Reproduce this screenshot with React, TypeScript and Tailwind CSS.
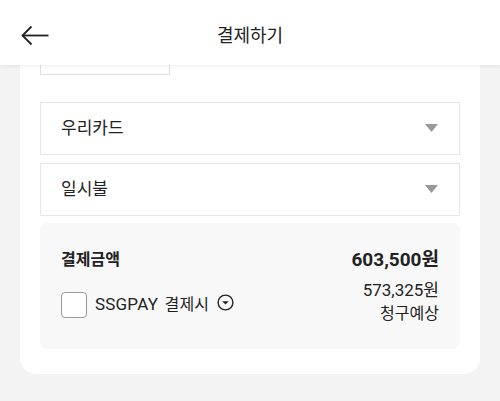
const options = ["우리카드", "일시불"];

function Select({ label }: { label: string }) {
  return (
    <div className="flex items-center justify-between h-[53px] border border-[#e6e6e6] bg-white pl-5 pr-[21px]">
      <span className="text-[17px] text-[#222]">{label}</span>
      <svg width="13" height="8" viewBox="0 0 13 8" className="mt-[-2px]">
        <path d="M0 0h13L6.5 8z" fill="#999" />
      </svg>
    </div>
  );
}

export default function App() {
  return (
    <div
      className="w-[500px] h-[401px] overflow-hidden bg-[#f3f3f3] flex flex-col"
      style={{ fontFamily: 'Roboto, "Noto Sans CJK KR", sans-serif' }}
    >
      {/* Header */}
      <header className="relative z-10 h-[65px] shrink-0 bg-white flex items-center justify-center shadow-[0_1px_5px_rgba(0,0,0,0.08)]">
        <button className="absolute left-[20px] top-[24px] text-[#222]">
          <svg width="30" height="24" viewBox="0 0 30 24" fill="none" stroke="currentColor" strokeWidth="1.8">
            <path d="M2.5 11.5H28.5" />
            <path d="M11.5 2.5L2.5 11.5L11.5 20.5" strokeLinejoin="miter" />
          </svg>
        </button>
        <h1 className="text-[18px] text-[#222] mt-[5px]">결제하기</h1>
      </header>

      <div className="mx-5 bg-white rounded-b-2xl px-5 pb-[25px]">
        <div className="w-[130px] h-[10px] border border-t-0 border-[#e0e0e0]" />

        <div className="mt-[27px] flex flex-col gap-2">
          {options.map((o) => (
            <Select key={o} label={o} />
          ))}
        </div>

        <div className="mt-[7px] h-[126px] bg-[#f8f8f8] rounded-lg px-[21px] pt-[26px]">
          <div className="flex items-center justify-between h-[22px]">
            <span className="text-[16px] font-bold text-[#222]">결제금액</span>
            <span className="text-[19px] font-bold text-[#222]">603,500원</span>
          </div>
          <div className="mt-[8px] flex items-start justify-between">
            <div className="flex items-center mt-[13px]">
              <span className="w-[26px] h-[26px] rounded-[4px] border border-[#999] bg-white" />
              <span className="ml-[8px] text-[17px] text-[#222] tracking-[0.2px]">
                SSGPAY <span className="ml-[2px] text-[16px]">결제시</span>
              </span>
              <svg width="17" height="17" viewBox="0 0 17 17" className="ml-[8px] mt-[-5px]">
                <circle cx="8.5" cy="8.5" r="7.4" fill="none" stroke="#222" strokeWidth="1.4" />
                <path d="M5.3 7.2h6.4L8.5 10.6z" fill="#222" />
              </svg>
            </div>
            <div className="text-right leading-[23px] text-[#222]">
              <div className="text-[17px]">573,325원</div>
              <div className="text-[16px]">청구예상</div>
            </div>
          </div>
        </div>
      </div>
    </div>
  );
}
